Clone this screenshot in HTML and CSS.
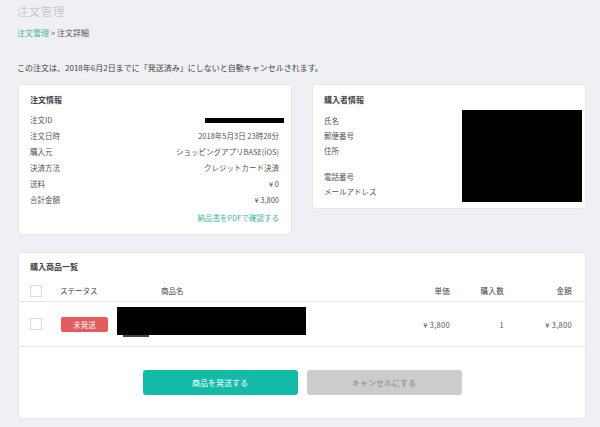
FILE: index.html
```html
<!DOCTYPE html>
<html lang="ja">
<head>
    <meta charset="UTF-8">
    <title>注文詳細</title>
    <link rel="stylesheet" href="styles.css">
</head>
<body>

    <h1 class="page-title">注文管理</h1>
    <div class="breadcrumb"><a href="#">注文管理</a> &gt; 注文詳細</div>
    <p class="notice">この注文は、2018年6月2日までに「発送済み」にしないと自動キャンセルされます。</p>

    <div class="info-row">
        <div class="card order-card">
            <h2 class="card-title">注文情報</h2>
            <div class="kv"><span>注文ID</span><span class="redact-line"></span></div>
            <div class="kv"><span>注文日時</span><span>2018年5月3日 23時28分</span></div>
            <div class="kv"><span>購入元</span><span>ショッピングアプリBASE(iOS)</span></div>
            <div class="kv"><span>決済方法</span><span>クレジットカード決済</span></div>
            <div class="kv"><span>送料</span><span>¥ 0</span></div>
            <div class="kv"><span>合計金額</span><span>¥ 3,800</span></div>
            <div class="pdf-link"><a href="#">納品書をPDFで確認する</a></div>
        </div>

        <div class="card buyer-card">
            <h2 class="card-title">購入者情報</h2>
            <div class="kv">氏名</div>
            <div class="kv">郵便番号</div>
            <div class="kv address">住所</div>
            <div class="kv">電話番号</div>
            <div class="kv">メールアドレス</div>
            <div class="redact-box"></div>
        </div>
    </div>

    <div class="card items-card">
        <h2 class="card-title">購入商品一覧</h2>
        <div class="items-row items-head">
            <span class="checkbox"></span>
            <span>ステータス</span>
            <span>商品名</span>
            <span class="num">単価</span>
            <span class="num">購入数</span>
            <span class="num">金額</span>
        </div>
        <div class="items-row items-body">
            <span class="checkbox"></span>
            <span><span class="badge">未発送</span></span>
            <span></span>
            <span class="num">¥ 3,800</span>
            <span class="num">1</span>
            <span class="num">¥ 3,800</span>
            <div class="redact-name"></div>
            <div class="redact-thumb"></div>
        </div>
        <div class="actions">
            <button class="ship-btn">商品を発送する</button>
            <button class="cancel-btn">キャンセルにする</button>
        </div>
    </div>

</body>
</html>
```

FILE: styles.css
```css
body {
    font-family: "Noto Sans CJK JP", "Noto Sans", sans-serif;
    background: #eff0f4;
    color: #555;
    margin: 0;
    padding: 0 14px 0 17px;
    font-size: 8px;
}
a {
    color: #3fb59f;
    text-decoration: none;
}
.page-title {
    font-size: 11.5px;
    font-weight: 300;
    color: #b8b8b8;
    margin: 0;
    padding-top: 2px;
    line-height: 18px;
    letter-spacing: 0.5px;
}
.breadcrumb {
    margin-top: 6px;
    line-height: 14px;
    color: #555;
}
.notice {
    margin: 21px 0 0;
    line-height: 14px;
    color: #444;
}
.info-row {
    display: flex;
    align-items: flex-start;
    gap: 20px;
    margin-top: 9px;
    padding-left: 1px;
}
.card {
    background: white;
    border: 1px solid #e6e7ea;
    border-radius: 4px;
    box-sizing: border-box;
}
.card-title {
    font-size: 8px;
    font-weight: bold;
    color: #444;
    margin: 0;
    line-height: 16px;
}
.order-card {
    width: 274px;
    padding: 7px 12px 8px 11px;
    font-size: 7.5px;
}
.order-card .card-title {
    margin-bottom: 4px;
}
.kv {
    display: flex;
    justify-content: space-between;
    align-items: center;
    line-height: 16px;
}
.redact-line {
    width: 79px;
    height: 5px;
    background: black;
    margin-right: -5px;
}
.pdf-link {
    text-align: right;
    line-height: 16px;
    margin-top: 2px;
}
.buyer-card {
    width: 274px;
    height: 125px;
    padding: 7px 12px 8px 11px;
    position: relative;
    font-size: 7.5px;
}
.buyer-card .card-title {
    margin-bottom: 5px;
}
.buyer-card .kv {
    line-height: 15px;
}
.buyer-card .address {
    margin-bottom: 11px;
}
.redact-box {
    position: absolute;
    left: 149px;
    top: 25px;
    width: 120px;
    height: 92px;
    background: black;
}
.items-card {
    margin: 17px 0 9px 1px;
    width: 568px;
    padding-top: 6px;
    font-size: 7.5px;
}
.items-card .card-title {
    padding-left: 11px;
}
.items-row {
    display: grid;
    grid-template-columns: 30px 101px 1fr 60px 54px 68px;
    align-items: center;
    padding: 0 13px 0 11px;
    position: relative;
}
.items-head {
    height: 21px;
    margin-top: 5px;
    border-bottom: 1px solid #e6e7ea;
    color: #444;
}
.items-body {
    height: 44px;
    border-bottom: 1px solid #e6e7ea;
}
.num {
    text-align: right;
    letter-spacing: 0.3px;
}
.checkbox {
    width: 12px;
    height: 12px;
    border: 1px solid #dcdcdc;
    box-sizing: border-box;
    background: white;
}
.badge {
    display: inline-block;
    width: 47px;
    height: 15px;
    line-height: 15px;
    text-align: center;
    background: #e25c5c;
    color: white;
    border-radius: 2px;
    margin-left: 1px;
}
.redact-name {
    position: absolute;
    left: 98px;
    top: 5px;
    width: 189px;
    height: 28px;
    background: black;
}
.redact-thumb {
    position: absolute;
    left: 104px;
    top: 33px;
    width: 26px;
    height: 2px;
    background: #444;
}
.actions {
    display: flex;
    justify-content: center;
    gap: 9px;
    padding: 23px 0 23px;
}
.ship-btn, .cancel-btn {
    width: 155px;
    height: 25px;
    border: none;
    border-radius: 3px;
    font-family: inherit;
    font-size: 8px;
}
.ship-btn {
    background: #13baa8;
    color: white;
}
.cancel-btn {
    background: #cccccc;
    color: #888;
}
```
